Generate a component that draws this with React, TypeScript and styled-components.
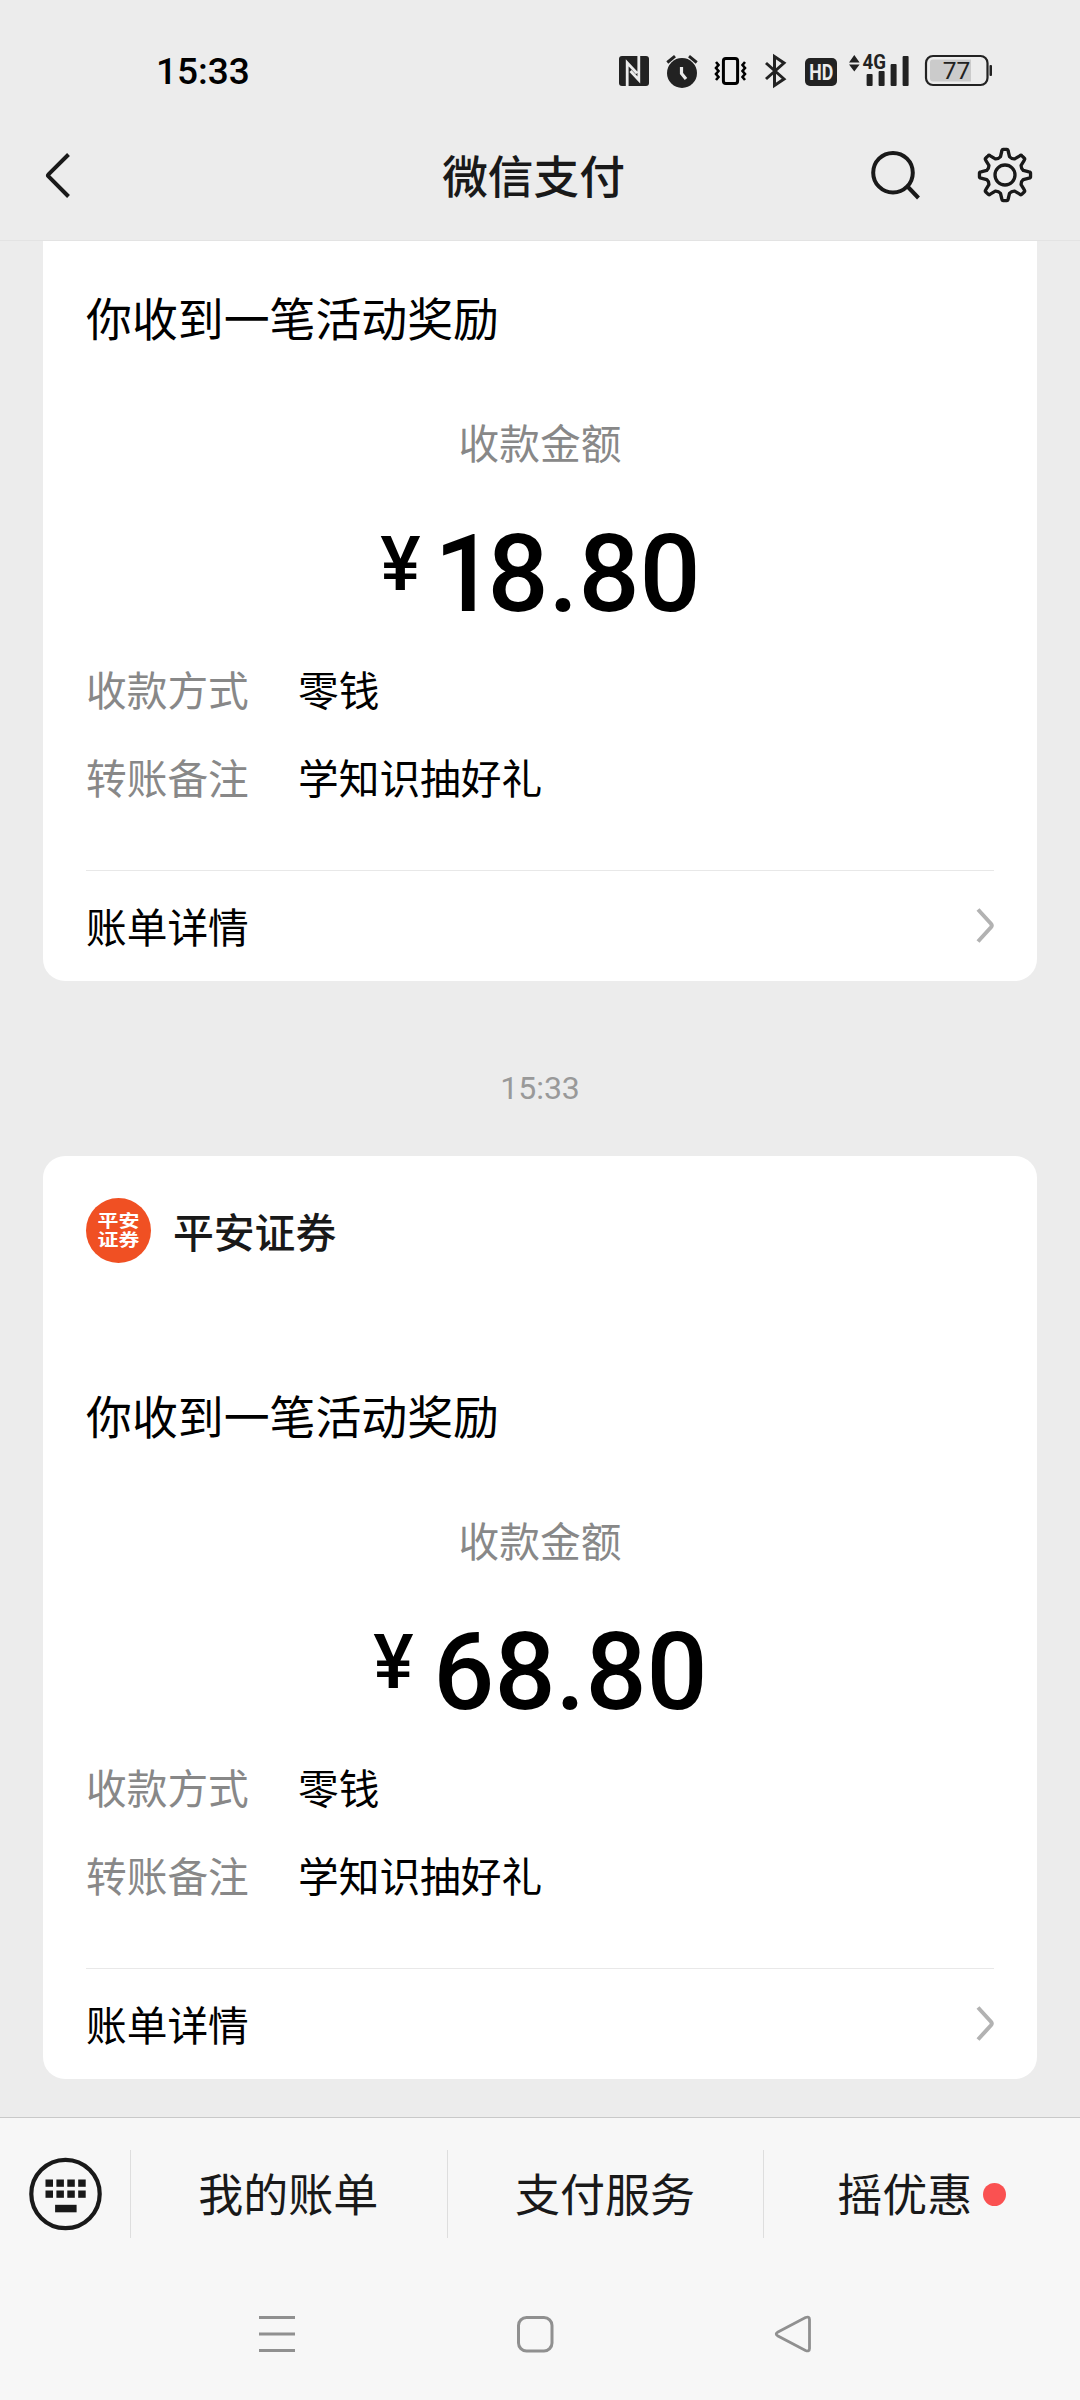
import React from 'react';
import styled, { createGlobalStyle } from 'styled-components';

const GlobalStyle = createGlobalStyle`
  *, *::before, *::after { box-sizing: border-box; }
  body {
    margin: 0;
    background: #ececec;
    font-family: Roboto, 'Noto Sans CJK SC', sans-serif;
  }
  svg { display: block; flex: none; overflow: visible; }
`;

const Screen = styled.div`
  width: 1080px;
  height: 2400px;
  display: flex;
  flex-direction: column;
  overflow: hidden;
  background: #ececec;
  color: #000;
`;

const StatusBar = styled.div`
  height: 110px;
  padding: 53px 86px 0 156px;
  display: flex;
  justify-content: space-between;
  align-items: flex-start;
`;

const Clock = styled.div`
  font-size: 37px;
  line-height: 37px;
  font-weight: 500;
`;

const StatusIcons = styled.div`
  display: flex;
  gap: 12px;
`;

const Header = styled.header`
  height: 131px;
  padding: 0 47px 0 38px;
  display: grid;
  grid-template-columns: 200px 1fr 200px;
  align-items: center;
  border-bottom: 1px solid #e3e3e3;
`;

const Title = styled.h1`
  margin: 0;
  padding: 7px 0 0 4px;
  font-size: 45.7px;
  line-height: 60px;
  font-weight: 500;
  text-align: center;
  color: #191919;
  transform: translateX(-4px);
`;

const Actions = styled.div`
  display: flex;
  justify-content: flex-end;
  gap: 57px;
`;

const Feed = styled.main`
  flex: 1;
  min-height: 0;
  padding: 0 43px;
`;

const Card = styled.section<{ $clipped?: boolean }>`
  height: ${p => (p.$clipped ? 740 : 923)}px;
  padding: 0 43px;
  display: flex;
  flex-direction: column;
  justify-content: flex-end;
  background: #fff;
  border-radius: ${p => (p.$clipped ? '0 0 22px 22px' : '22px')};
`;

const Merchant = styled.div`
  margin-bottom: auto;
  padding-top: 42px;
  display: flex;
  align-items: center;
  gap: 22px;
`;

const Logo = styled.div`
  width: 65px;
  height: 65px;
  border-radius: 50%;
  background: #f05023;
  color: #fff;
  display: grid;
  place-items: center;
`;

const LogoText = styled.div`
  width: 44px;
  text-align: center;
  font-size: 21px;
  line-height: 23px;
  font-weight: 700;
  transform: scaleY(0.82);
`;

const MerchantName = styled.div`
  padding-top: 7px;
  font-size: 40.8px;
  line-height: 56px;
  font-weight: 500;
  color: #191919;
`;

const Headline = styled.div`
  height: 60px;
  font-size: 45.9px;
  line-height: 60px;
`;

const AmountLabel = styled.div`
  margin-top: 67px;
  font-size: 40.7px;
  line-height: 56px;
  text-align: center;
  color: #888;
`;

const Amount = styled.div`
  height: 110px;
  margin-top: 45px;
  display: flex;
  justify-content: center;
  align-items: flex-start;
  font-weight: 500;
`;

const Currency = styled.span<{ $tight: boolean }>`
  width: 45px;
  margin: 7px ${p => (p.$tight ? 9 : 15)}px 0 1px;
  font-size: 76px;
  line-height: 78px;
`;

const Figure = styled.span`
  padding-top: 1px;
  font-size: 107.5px;
  line-height: 110px;
`;

const Digit = styled.span<{ $narrow: boolean }>`
  letter-spacing: ${p => (p.$narrow ? '-8px' : '0')};
`;

const Details = styled.div`
  margin-top: 36px;
  display: grid;
  grid-template-columns: 212px 1fr;
  row-gap: 32px;
  font-size: 40.7px;
  line-height: 56px;
`;

const Label = styled.span`
  color: #888;
`;

const CardFooter = styled.div`
  height: 111px;
  margin-top: 62px;
  display: flex;
  justify-content: space-between;
  align-items: center;
  border-top: 1px solid #e8e8e8;
  font-size: 40.7px;
  line-height: 56px;

  > span { padding-top: 5px; }
`;

const Timestamp = styled.div`
  height: 175px;
  padding-top: 38px;
  display: flex;
  align-items: center;
  justify-content: center;
  font-size: 32px;
  color: #999;
`;

const MenuBar = styled.nav`
  height: 153px;
  border-top: 1px solid #c9c9c9;
  background: #f7f7f7;
  display: grid;
  grid-template-columns: 130px repeat(3, 1fr);
  align-items: center;
`;

const KeyboardButton = styled.div`
  padding-left: 28px;
`;

const MenuItem = styled.div`
  height: 88px;
  padding: 6px 1px 0 0;
  border-left: 1px solid #dedede;
  display: flex;
  align-items: center;
  justify-content: center;
  gap: 11px;
  font-size: 45px;
  line-height: 60px;
  color: #191919;
`;

const Dot = styled.i`
  width: 23px;
  height: 23px;
  margin-top: -5px;
  border-radius: 50%;
  background: #fa5151;
`;

const SystemNav = styled.div`
  height: 130px;
  padding: 42px 265px 0 255px;
  display: flex;
  justify-content: space-between;
  align-items: flex-start;
  background: #f7f7f7;
`;

const NfcIcon = () => (
  <svg width="33" height="36" viewBox="619 53 33 36">
    <rect x="619" y="56" width="30" height="30" rx="3" fill="#222" />
    <path d="M627.200 86V62.800L637 73.200M638.800 56V80L630.500 71" fill="none" stroke="#ececec" strokeWidth="2.800" />
  </svg>
);

const AlarmIcon = () => (
  <svg width="37" height="36" viewBox="664 53 37 36">
    <circle cx="682" cy="73" r="15" fill="#222" />
    <path d="M667.300 62.500L675 56.200M696.700 62.500L689 56.200" stroke="#222" strokeWidth="3" />
    <path d="M681.500 67V73.500L686 79" fill="none" stroke="#ececec" strokeWidth="3.200" />
  </svg>
);

const VibrateIcon = () => (
  <svg width="35" height="36" viewBox="713 53 35 36" fill="none" stroke="#000">
    <rect x="723.400" y="58.400" width="14.200" height="25.200" rx="2.500" strokeWidth="3" />
    <path d="M716 62l2.500 3-2.500 3 2.500 3-2.500 3 2.500 3-2.500 3M745 62l-2.500 3 2.500 3-2.500 3 2.500 3-2.500 3 2.500 3" strokeWidth="2.600" />
  </svg>
);

const BluetoothIcon = () => (
  <svg width="32" height="36" viewBox="760 53 32 36">
    <path d="M766 63L784 79L774.500 85.500V56.500L784 63L766 79" fill="none" stroke="#222" strokeWidth="3" />
  </svg>
);

const HdIcon = () => (
  <svg width="33" height="36" viewBox="804 53 33 36">
    <rect x="805" y="58" width="32" height="28" rx="5" fill="#222" />
    <text x="809.200" y="80.300" fontSize="22.500" fontWeight="700" fill="#ececec" textLength="24" lengthAdjust="spacingAndGlyphs">HD</text>
  </svg>
);

const SignalIcon = () => (
  <svg width="61" height="36" viewBox="849 53 61 36" fill="#222">
    <path d="M849 62.500l5.300-7.500 5.300 7.500zM849 64.500l5.300 7 5.300-7z" />
    <text x="862.500" y="69.300" fontSize="21" fontWeight="700" textLength="23.500" lengthAdjust="spacingAndGlyphs">4G</text>
    <rect x="866.600" y="74" width="6" height="12" rx="1" />
    <rect x="878.600" y="71" width="6" height="15" rx="1" />
    <rect x="890.600" y="64" width="6" height="22" rx="1" />
    <rect x="902.600" y="56" width="6" height="30" rx="1" />
  </svg>
);

const BatteryIcon = () => (
  <svg width="72" height="36" viewBox="922 53 72 36">
    <rect x="926" y="56" width="61.500" height="29" rx="7" fill="none" stroke="#222" strokeWidth="2.200" />
    <path d="M933 59.500H971V81.500H933a3 3 0 0 1-3-3V62.500a3 3 0 0 1 3-3z" fill="#cbcbcb" />
    <rect x="989.500" y="65" width="2.500" height="11" rx="1" fill="#222" />
    <text x="942.700" y="79.200" fontSize="24.500" fill="#222">77</text>
  </svg>
);

const BackIcon = () => (
  <svg width="40" height="50" viewBox="38 150 40 50">
    <path d="M68.500 154.500L48.500 174.300Q47.500 175.300 48.500 176.300L68.500 196.500" fill="none" stroke="#191919" strokeWidth="4" />
  </svg>
);

const SearchIcon = () => (
  <svg width="50" height="56" viewBox="870 147 50 56" fill="none" stroke="#191919" strokeWidth="4">
    <circle cx="893" cy="172.700" r="19.800" />
    <path d="M908 187L918.500 198" />
  </svg>
);

const gearPath = (() => {
  const parts: string[] = [];
  const at = (r: number, deg: number) => {
    const a = (deg * Math.PI) / 180;
    return `${(28 + r * Math.cos(a)).toFixed(2)} ${(28 + r * Math.sin(a)).toFixed(2)}`;
  };
  for (let i = 0; i < 8; i++) {
    const c = i * 45 - 90;
    parts.push(`${i ? 'L' : 'M'}${at(18.8, c - 14)}`);
    parts.push(`L${at(24.2, c - 7.5)}Q${at(25.8, c - 6.5)} ${at(25.6, c - 3.5)}`);
    parts.push(`L${at(25.6, c + 3.5)}Q${at(25.8, c + 6.5)} ${at(24.2, c + 7.5)}`);
    parts.push(`L${at(18.8, c + 14)}Q${at(17.2, c + 22.5)} ${at(18.8, c + 31)}`);
  }
  return parts.join('') + 'Z';
})();

const GearIcon = () => (
  <svg width="56" height="56" viewBox="0 0 56 56" fill="none" stroke="#191919" strokeWidth="3.300" strokeLinejoin="round">
    <path d={gearPath} />
    <circle cx="28" cy="28" r="10" />
  </svg>
);

const ChevronIcon = () => (
  <svg width="20" height="40" viewBox="974 906 20 40">
    <path d="M978 909.500L991 923.700Q992.500 925.500 991 927.300L978 941.500" fill="none" stroke="#b2b2b2" strokeWidth="4" />
  </svg>
);

const KeyboardIcon = () => (
  <svg width="75" height="76" viewBox="28 2155.500 75 76" fill="#191919">
    <circle cx="65.500" cy="2193.500" r="34.200" fill="none" stroke="#191919" strokeWidth="4.200" />
    {[2179, 2190].map(y =>
      [45.5, 56.4, 67.3, 78.2].map(x => <rect key={`${x}-${y}`} x={x} y={y} width="7.500" height="7.300" />)
    )}
    <rect x="55.100" y="2204.300" width="21.500" height="7.500" />
  </svg>
);

const RecentsIcon = () => (
  <svg width="44" height="44" viewBox="0 0 44 44" stroke="#909090" strokeWidth="3">
    <path d="M4 5.500H40M4 22H40M4 38.500H40" />
  </svg>
);

const HomeIcon = () => (
  <svg width="44" height="44" viewBox="0 0 44 44" fill="none" stroke="#909090" strokeWidth="3">
    <rect x="5.500" y="5.500" width="33.500" height="33.500" rx="8" />
  </svg>
);

const BackNavIcon = () => (
  <svg width="44" height="44" viewBox="0 0 44 44" fill="none" stroke="#909090" strokeWidth="2.800">
    <path d="M6.500 20.300L34.500 5.500Q38.500 4 38.500 7.500V36.500Q38.500 40 34.500 38.500L6.500 23.700Q4 22 6.500 20.300Z" />
  </svg>
);

const PaymentBody = ({ amount }: { amount: string }) => (
  <>
    <Headline>你收到一笔活动奖励</Headline>
    <AmountLabel>收款金额</AmountLabel>
    <Amount>
      <Currency $tight={amount.startsWith('1')}>¥</Currency>
      <Figure>
        <Digit $narrow={amount.startsWith('1')}>{amount.slice(0, 1)}</Digit>
        {amount.slice(1)}
      </Figure>
    </Amount>
    <Details>
      <Label>收款方式</Label>
      <span>零钱</span>
      <Label>转账备注</Label>
      <span>学知识抽好礼</span>
    </Details>
    <CardFooter>
      <span>账单详情</span>
      <ChevronIcon />
    </CardFooter>
  </>
);

export default function App() {
  return (
    <Screen>
      <GlobalStyle />
      <StatusBar>
        <Clock>15:33</Clock>
        <StatusIcons>
          <NfcIcon />
          <AlarmIcon />
          <VibrateIcon />
          <BluetoothIcon />
          <HdIcon />
          <SignalIcon />
          <BatteryIcon />
        </StatusIcons>
      </StatusBar>
      <Header>
        <BackIcon />
        <Title>微信支付</Title>
        <Actions>
          <SearchIcon />
          <GearIcon />
        </Actions>
      </Header>
      <Feed>
        <Card $clipped>
          <PaymentBody amount="18.80" />
        </Card>
        <Timestamp>15:33</Timestamp>
        <Card>
          <Merchant>
            <Logo>
              <LogoText>平安<br />证券</LogoText>
            </Logo>
            <MerchantName>平安证券</MerchantName>
          </Merchant>
          <PaymentBody amount="68.80" />
        </Card>
      </Feed>
      <MenuBar>
        <KeyboardButton>
          <KeyboardIcon />
        </KeyboardButton>
        <MenuItem>我的账单</MenuItem>
        <MenuItem>支付服务</MenuItem>
        <MenuItem>
          摇优惠
          <Dot />
        </MenuItem>
      </MenuBar>
      <SystemNav>
        <RecentsIcon />
        <HomeIcon />
        <BackNavIcon />
      </SystemNav>
    </Screen>
  );
}
